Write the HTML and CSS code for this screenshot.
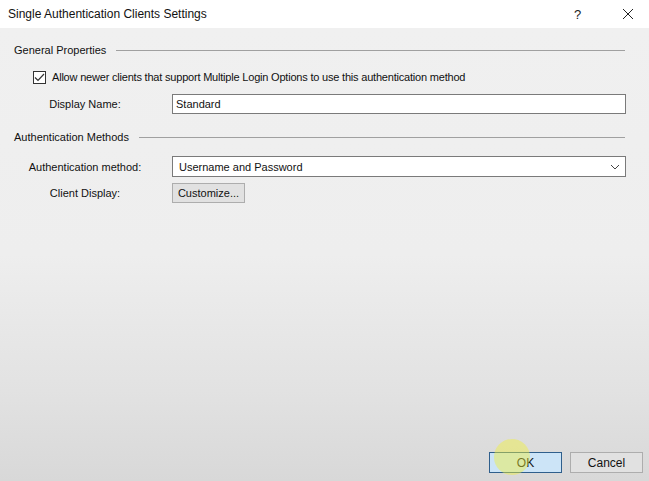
FILE: index.html
```html
<!DOCTYPE html>
<html>
<head>
<meta charset="utf-8">
<link rel="stylesheet" href="styles.css">
</head>
<body>
<div class="dialog">
  <div class="titlebar">
    <span class="title">Single Authentication Clients Settings</span>
    <span class="help">?</span>
    <svg class="close" width="12" height="12" viewBox="0 0 12 12"><path d="M1 1L11 11M11 1L1 11" stroke="#222" stroke-width="1" fill="none"/></svg>
  </div>
  <div class="content">
    <div class="group-head"><span>General Properties</span><div class="rule"></div></div>
    <div class="check-row">
      <span class="checkbox"><svg width="11" height="9" viewBox="0 0 11 9"><path d="M1 4.5L4 7.5L10 1" stroke="#333" stroke-width="1.2" fill="none"/></svg></span>
      <span class="check-text">Allow newer clients that support Multiple Login Options to use this authentication method</span>
    </div>
    <div class="field-row r-name">
      <span class="label">Display Name:</span>
      <div class="input">Standard</div>
    </div>
    <div class="group-head g2"><span>Authentication Methods</span><div class="rule"></div></div>
    <div class="field-row r-method">
      <span class="label">Authentication method:</span>
      <div class="input select"><span>Username and Password</span>
        <svg width="10" height="6" viewBox="0 0 10 6"><path d="M1 1L5 5L9 1" stroke="#444" stroke-width="1" fill="none"/></svg>
      </div>
    </div>
    <div class="field-row r-client">
      <span class="label">Client Display:</span>
      <div class="btn">Customize...</div>
    </div>
    <div class="spacer"></div>
    <div class="footer">
      <div class="btn ok">OK</div>
      <div class="btn cancel">Cancel</div>
      <div class="cursor-hl"></div>
    </div>
  </div>
</div>
</body>
</html>
```
FILE: styles.css
```css
html, body { margin: 0; padding: 0; }
body {
  width: 649px; height: 481px; overflow: hidden;
  font-family: "Liberation Sans", Arial, sans-serif;
  font-size: 11px; color: #111;
}
.dialog { width: 649px; height: 481px; display: flex; flex-direction: column; }
.titlebar {
  height: 28px; flex: none; background: #fff;
  display: flex; align-items: center;
  font-size: 12px;
}
.title { margin-left: 8px; flex: 1; color: #111; }
.help { width: 12px; margin-right: 36px; font-size: 13px; color: #222; }
.close { margin-right: 15px; }
.content {
  flex: 1; display: flex; flex-direction: column;
  background: linear-gradient(to bottom, #f0f0f0 0%, #eeeeee 50%, #e2e2e2 80%, #d8d8d8 100%);
  position: relative;
}
.group-head {
  display: flex; align-items: center; margin: 15px 24px 0 14px; height: 14px;
}
.group-head.g2 { margin-top: 16px; }
.group-head .rule { flex: 1; height: 1px; background: #a0a0a0; margin-left: 10px; }
.check-row { display: flex; align-items: center; margin: 13px 0 0 33px; height: 14px; }
.check-text { letter-spacing: -0.2px; }
.checkbox {
  width: 11px; height: 11px; border: 1px solid #333; background: #fff;
  display: flex; align-items: center; justify-content: center; margin-right: 6px;
}
.field-row { display: flex; align-items: center; margin-right: 23px; }
.r-name { margin-top: 10px; }
.r-method { margin-top: 12px; }
.r-client { margin-top: 6px; }
.label { width: 142px; margin-left: 14px; margin-right: 16px; text-align: center; }
.input {
  flex: 1; height: 18px; border: 1px solid #7a7a7a; background: #fff;
  display: flex; align-items: center; padding-left: 3px;
}
.select { height: 19px; justify-content: space-between; padding-left: 6px; padding-right: 5px; }
.btn {
  height: 18px; border: 1px solid #adadad; background: #e1e1e1;
  display: flex; align-items: center; justify-content: center;
}
.r-client .btn { width: 71px; }
.spacer { flex: 1; }
.footer { display: flex; justify-content: flex-end; gap: 8px; margin: 0 6px 8px 0; position: relative; }
.footer .btn { width: 71px; height: 19px; font-size: 12px; }
.ok { border-color: #2f5f8c !important; background: #cce4f7 !important; }
.cursor-hl {
  position: absolute; left: 494px; top: -13px; width: 36px; height: 36px;
  border-radius: 50%; background: rgba(240, 240, 60, 0.45);
}
```
